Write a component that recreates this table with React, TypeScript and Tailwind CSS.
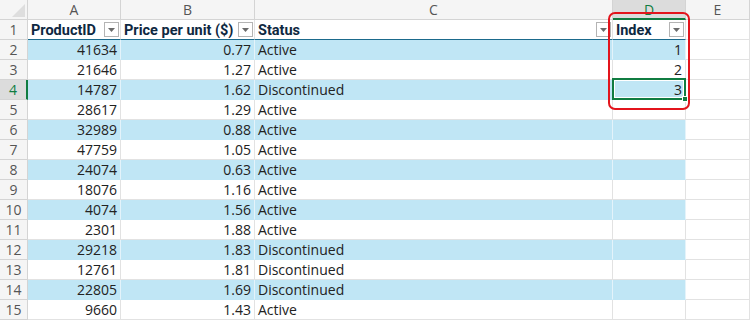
const rows = [
  { id: 41634, price: "0.77", status: "Active", index: "1" },
  { id: 21646, price: "1.27", status: "Active", index: "2" },
  { id: 14787, price: "1.62", status: "Discontinued", index: "3" },
  { id: 28617, price: "1.29", status: "Active", index: "" },
  { id: 32989, price: "0.88", status: "Active", index: "" },
  { id: 47759, price: "1.05", status: "Active", index: "" },
  { id: 24074, price: "0.63", status: "Active", index: "" },
  { id: 18076, price: "1.16", status: "Active", index: "" },
  { id: 4074, price: "1.56", status: "Active", index: "" },
  { id: 2301, price: "1.88", status: "Active", index: "" },
  { id: 29218, price: "1.83", status: "Discontinued", index: "" },
  { id: 12761, price: "1.81", status: "Discontinued", index: "" },
  { id: 22805, price: "1.69", status: "Discontinued", index: "" },
  { id: 9660, price: "1.43", status: "Active", index: "" },
]

function FilterButton() {
  return (
    <span className="flex h-[15px] w-[15px] shrink-0 items-center justify-center border border-[#b4b4b4] bg-white">
      <svg width="7" height="4" viewBox="0 0 7 4">
        <path d="M0 0h7L3.5 4z" fill="#6b6b6b" />
      </svg>
    </span>
  )
}

function ColHeader({ label, selected }: { label: string; selected?: boolean }) {
  return (
    <div
      className={
        selected
          ? "flex h-[20px] items-center justify-center border-r border-b-2 border-r-[#d4d4d4] border-b-[#107c41] bg-[#dcdcdc] text-[14px] text-[#107c41]"
          : "flex h-[20px] items-center justify-center border-r border-b border-[#d4d4d4] bg-[#f5f5f5] text-[14px] text-[#555555]"
      }
    >
      {label}
    </div>
  )
}

function RowHeader({ n, selected }: { n: number; selected?: boolean }) {
  return (
    <div
      className={
        selected
          ? "flex h-[20px] items-center justify-center border-r-2 border-b border-r-[#107c41] border-b-[#d4d4d4] bg-[#dcdcdc] text-[14px] text-[#107c41]"
          : "flex h-[20px] items-center justify-center border-r border-b border-[#d4d4d4] bg-[#f5f5f5] text-[14px] text-[#555555]"
      }
    >
      {n}
    </div>
  )
}

function TableHead({ label }: { label: string }) {
  return (
    <div className="flex h-[20px] items-center justify-between gap-[2px] border-r border-b border-r-[#e2e2e2] border-b-[#1b6a8c] bg-white pl-[3px] pr-[1px] font-['Roboto',sans-serif] text-[14.5px] font-bold text-[#0e2841]">
      <span className="relative top-[2px] whitespace-nowrap leading-none">{label}</span>
      <FilterButton />
    </div>
  )
}

function Cell({
  children,
  banded,
  right,
}: {
  children?: React.ReactNode
  banded?: boolean
  right?: boolean
}) {
  const base = banded
    ? "h-[20px] border-r border-b border-r-[#e4f3fa] border-b-[#c0e6f5] bg-[#c0e6f5] text-[14px] leading-[20px] text-[#222222] px-[3px]"
    : "h-[20px] border-r border-b border-[#e2e2e2] bg-white text-[14px] leading-[20px] text-[#222222] px-[3px]"
  return <div className={right ? base + " text-right" : base}>{children}</div>
}

export default function App() {
  return (
    <div className="relative h-[320px] w-[750px] overflow-hidden bg-white font-['Open_Sans',sans-serif]">
      <div className="grid grid-cols-[28px_93px_134px_358px_73px_64px]">
        <div className="relative h-[20px] border-r border-b border-[#d4d4d4] bg-[#f5f5f5]">
          <svg className="absolute right-[2px] bottom-[2px]" width="13" height="13" viewBox="0 0 13 13">
            <path d="M13 0v13H0z" fill="#dedede" />
          </svg>
        </div>
        <ColHeader label="A" />
        <ColHeader label="B" />
        <ColHeader label="C" />
        <ColHeader label="D" selected />
        <ColHeader label="E" />

        <RowHeader n={1} />
        <TableHead label="ProductID" />
        <TableHead label="Price per unit ($)" />
        <TableHead label="Status" />
        <TableHead label="Index" />
        <Cell />

        {rows.map((r, i) => {
          const n = i + 2
          const banded = n % 2 === 0
          const selected = n === 4
          return [
            <RowHeader key={`h${n}`} n={n} selected={selected} />,
            <Cell key={`a${n}`} banded={banded} right>
              {r.id}
            </Cell>,
            <Cell key={`b${n}`} banded={banded} right>
              {r.price}
            </Cell>,
            <Cell key={`c${n}`} banded={banded}>
              {r.status}
            </Cell>,
            selected ? (
              <div key={`d${n}`} className="relative h-[20px] border-r border-b border-[#c0e6f5] bg-[#c0e6f5] px-[3px] text-right text-[14px] leading-[20px] text-[#222222]">
                {r.index}
                <div className="absolute -top-[2px] -left-[1px] -right-[1px] -bottom-[1px] border-2 border-[#107c41] shadow-[inset_0_0_0_1px_#ffffff]" />
                <div className="absolute -right-[3px] -bottom-[3px] h-[6px] w-[6px] border border-white bg-[#107c41]" />
              </div>
            ) : (
              <Cell key={`d${n}`} banded={banded} right>
                {r.index}
              </Cell>
            ),
            <Cell key={`e${n}`} />,
          ]
        })}
      </div>

      <div className="pointer-events-none absolute top-[12px] left-[608px] h-[98px] w-[82px] rounded-[7px] border-2 border-[#e3141c]" />
    </div>
  )
}
